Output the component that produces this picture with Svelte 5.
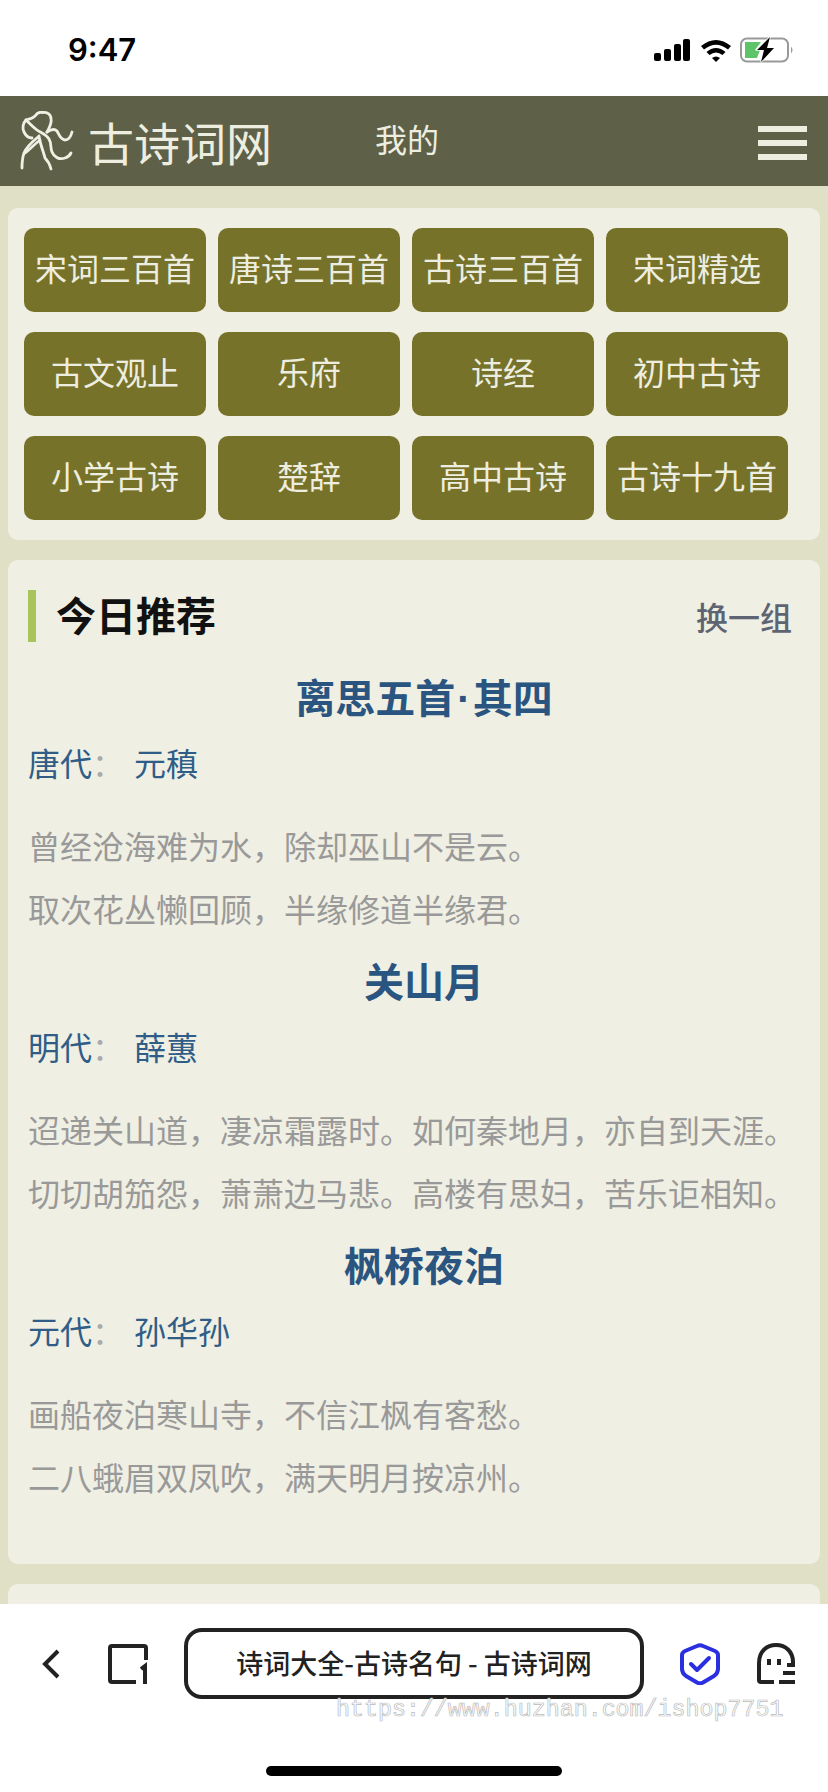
<script>
	const cats = ['宋词三百首', '唐诗三百首', '古诗三百首', '宋词精选', '古文观止', '乐府', '诗经', '初中古诗', '小学古诗', '楚辞', '高中古诗', '古诗十九首'];
	const poems = [
		{ title: ['离思五首', '其四'], dynasty: '唐代', author: '元稹', lines: ['曾经沧海难为水，除却巫山不是云。', '取次花丛懒回顾，半缘修道半缘君。'] },
		{ title: ['关山月'], dynasty: '明代', author: '薛蕙', lines: ['迢递关山道，凄凉霜露时。如何秦地月，亦自到天涯。', '切切胡笳怨，萧萧边马悲。高楼有思妇，苦乐讵相知。'] },
		{ title: ['枫桥夜泊'], dynasty: '元代', author: '孙华孙', lines: ['画船夜泊寒山寺，不信江枫有客愁。', '二八蛾眉双凤吹，满天明月按凉州。'] }
	];
</script>

<div class="page">
	<div class="status">
		<span class="time">9:47</span>
		<div class="status-icons">
			<svg width="38" height="24" viewBox="1 0 38 24"><rect x="1" y="15" width="7" height="8" rx="2"/><rect x="11" y="11" width="7" height="12" rx="2"/><rect x="21" y="6" width="7" height="17" rx="2"/><rect x="30" y="1" width="7" height="22" rx="2"/></svg>
			<svg width="32" height="24" viewBox="0 0 32 24"><path d="M1 8 Q16 -4 31 8 L28 11.500 Q16 2 4 11.500Z"/><path d="M6.500 14 Q16 6 25.500 14 L22.500 17 Q16 12 9.500 17Z"/><path d="M12 20 Q16 17 20 20 L16 24Z"/></svg>
			<svg width="54" height="26" viewBox="0 0 54 26">
				<rect x="1" y="1.500" width="47" height="23" rx="6" fill="none" stroke="#999" stroke-width="2"/>
				<path d="M5 5h16l-6 8h5l-3 8H5z" fill="#5ec46a"/>
				<path d="M30 0 L17 13 H24 L21 25 L34 11 H27Z" fill="#000" stroke="#fff" stroke-width="1.500" paint-order="stroke"/>
				<path d="M51 9.500 Q54 13 51 16.500Z" fill="#999"/>
			</svg>
		</div>
	</div>

	<header class="topbar">
		<svg class="logo" width="56" height="60" viewBox="0 0 56 60" fill="none" stroke="#f0f0e4" stroke-width="2.800" stroke-linecap="round">
			<path d="M6 9 C10 8 13 7 15 5 C17 2 20 1 22 1.500 C27 1 31 3 31 8 C32 13 29 17 27 21"/>
			<path d="M27 21 C30 19 34 17 37 20 C39 24 41 29 45 29 C49 29 51 25 52 21"/>
			<path d="M6 9 C10 13 13 16 17 19 C21 22 26 23 29 28 C32 33 30 37 32 41 C34 46 39 49 45 47 C48 46 50 44 51 42"/>
			<path d="M6 9 C3 12 2 17 4 21 C6 25 9 27 12 27"/>
			<path d="M18 26 C12 31 6 36 4 42 C2 48 2 52 2 57"/>
			<path d="M19 25 C20 33 24 42 25 47 C28 50 30 54 31 58"/>
			<path d="M5 42 C10 38 15 33 20 29"/>
		</svg>
		<span class="brand">古诗词网</span>
		<span class="mine">我的</span>
		<div class="burger"><i></i><i></i><i></i></div>
	</header>

	<main class="content">
		<section class="card cats">
			{#each cats as c}
				<div class="cat">{c}</div>
			{/each}
		</section>

		<section class="card rec">
			<div class="rec-head">
				<h2>今日推荐</h2>
				<span class="swap">换一组</span>
			</div>
			{#each poems as p}
				<article class="poem">
					<h3>
						{#each p.title as part, i}
							{#if i > 0}<span class="dot">·</span>{/if}{part}
						{/each}
					</h3>
					<p class="meta"><span class="dyn">{p.dynasty}</span><span class="colon">：</span><span class="author">{p.author}</span></p>
					<div class="lines">
						{#each p.lines as l}
							<p>{l}</p>
						{/each}
					</div>
				</article>
			{/each}
		</section>

		<section class="card next"></section>
	</main>

	<div class="browser">
		<div class="toolbar">
			<svg class="back" width="18" height="30" viewBox="0 0 18 30" fill="none" stroke="#222" stroke-width="4"><path d="M16 2 L3 15 L16 28"/></svg>
			<svg class="tabs" width="40" height="40" viewBox="0 0 40 40" fill="none" stroke="#222" stroke-width="4"><path d="M38 16 V4 Q38 2 36 2 H4 Q2 2 2 4 V36 Q2 38 4 38 H28"/><path d="M33 25 L37 22 V40"/></svg>
			<div class="url">诗词大全-古诗名句 - 古诗词网</div>
			<svg class="shield" width="40" height="42" viewBox="0 0 40 42" fill="none" stroke="#2a2fe0" stroke-width="4" stroke-linejoin="round" stroke-linecap="round"><path d="M17 3 Q20 1.500 23 3 L35 8 Q38 9.500 38 12 V26 Q38 30 34 33 L23 39.500 Q20 41 17 39.500 L6 33 Q2 30 2 26 V12 Q2 9.500 5 8Z"/><path d="M11 21 L17 27 L29 15"/></svg>
			<svg class="ghost" width="38" height="42" viewBox="0 0 38 42" fill="none" stroke="#222" stroke-width="4"><path d="M2 37 V20 C2 8 10 2 19 2 C29 2 36 9 36 19 V20"/><path d="M2 37 Q2 39 4 39 H17"/><path d="M12 16 V22 M22 16 V22 M30 22 H38 M26 30 H38 M22 39 H38"/></svg>
		</div>
		<div class="watermark">https://www.huzhan.com/ishop7751</div>
		<div class="home"></div>
	</div>
</div>

<style>
	:global(body) {
		margin: 0;
		background: #e0e0c6;
	}
	.page {
		width: 828px;
		height: 1792px;
		overflow: hidden;
		position: relative;
		font-family: "Noto Sans CJK SC", "Liberation Sans", sans-serif;
		background: #e0e0c6;
		display: flex;
		flex-direction: column;
	}
	.status {
		height: 96px;
		background: #fff;
		display: flex;
		align-items: center;
		justify-content: space-between;
		padding: 3px 34px 0 68px;
		box-sizing: border-box;
		flex: none;
	}
	.time {
		font-family: Inter, "Liberation Sans", sans-serif;
		font-size: 31px;
		font-weight: 600;
		color: #000;
	}
	.status-icons {
		display: flex;
		align-items: center;
		gap: 8px;
	}
	.topbar {
		height: 90px;
		flex: none;
		background: #5e6148;
		display: flex;
		align-items: center;
		position: relative;
		padding-left: 20px;
		box-sizing: border-box;
	}
	.brand {
		font-size: 46px;
		color: #eeeee0;
		margin-left: 12px;
		line-height: 1;
	}
	.mine {
		font-size: 32px;
		color: #eeeee0;
		margin-left: 103px;
		margin-top: -6px;
	}
	.burger {
		margin-left: auto;
		margin-right: 21px;
		margin-top: 3px;
		display: flex;
		flex-direction: column;
		gap: 8px;
	}
	.burger i {
		display: block;
		width: 49px;
		height: 6px;
		background: #eeeee0;
	}
	.content {
		flex: 1;
		padding: 22px 8px 0;
		min-height: 0;
	}
	.card {
		background: #efefe3;
		border-radius: 10px;
	}
	.cats {
		display: grid;
		grid-template-columns: repeat(4, 182px);
		grid-auto-rows: 84px;
		gap: 20px 12px;
		padding: 20px 16px;
		margin-bottom: 20px;
	}
	.cat {
		background: #777229;
		color: #eeeee0;
		border-radius: 10px;
		font-size: 32px;
		padding-bottom: 7px;
		box-sizing: border-box;
		display: flex;
		align-items: center;
		justify-content: center;
	}
	.rec {
		padding: 30px 0 0 20px;
		height: 1004px;
		box-sizing: border-box;
		margin-bottom: 20px;
	}
	.rec-head {
		display: flex;
		justify-content: space-between;
		align-items: center;
		height: 52px;
		margin-bottom: 24px;
		border-left: 8px solid #a9c45a;
		padding-left: 20px;
		margin-right: 28px;
	}
	h2 {
		margin: 0 0 4px;
		font-size: 40px;
		font-weight: 700;
		color: #111;
	}
	.swap {
		font-size: 32px;
		font-weight: 500;
		color: #5f6472;
	}
	h3 {
		margin: 0;
		text-align: center;
		font-size: 40px;
		font-weight: 700;
		color: #2a5580;
		line-height: 60px;
		height: 60px;
		white-space: nowrap;
	}
	.dot {
		font-family: "Liberation Sans", sans-serif;
		margin: 0 2px;
	}
	.meta {
		margin: 12px 0 0;
		font-size: 32px;
		line-height: 48px;
		color: #2f5d87;
		display: flex;
	}
	.colon {
		color: #aaa;
		width: 42px;
	}
	.lines {
		margin-top: 28px;
	}
	.lines p {
		margin: 0;
		font-size: 32px;
		line-height: 63px;
		color: #999;
		white-space: nowrap;
	}
	.poem {
		margin-bottom: 10px;
	}
	.next {
		height: 40px;
	}
	.browser {
		position: absolute;
		left: 0;
		right: 0;
		bottom: 0;
		height: 188px;
		background: #fff;
	}
	.toolbar {
		display: flex;
		align-items: center;
		height: 71px;
		margin-top: 24px;
		padding-left: 42px;
	}
	.tabs {
		margin-left: 48px;
	}
	.url {
		margin-left: 36px;
		width: 460px;
		height: 71px;
		padding-bottom: 2px;
		box-sizing: border-box;
		border: 4px solid #222;
		border-radius: 18px;
		font-size: 27px;
		font-weight: 500;
		color: #222;
		display: flex;
		align-items: center;
		justify-content: center;
	}
	.shield {
		margin-left: 36px;
	}
	.ghost {
		margin-left: 37px;
	}
	.watermark {
		position: absolute;
		left: 336px;
		top: 93px;
		font-family: "Liberation Mono", monospace;
		font-size: 23.3px;
		line-height: 26px;
		color: #fff;
		-webkit-text-stroke: 0.7px #bbb;
		white-space: nowrap;
	}
	.home {
		position: absolute;
		left: 266px;
		top: 162px;
		width: 296px;
		height: 10px;
		border-radius: 5px;
		background: #000;
	}
</style>
